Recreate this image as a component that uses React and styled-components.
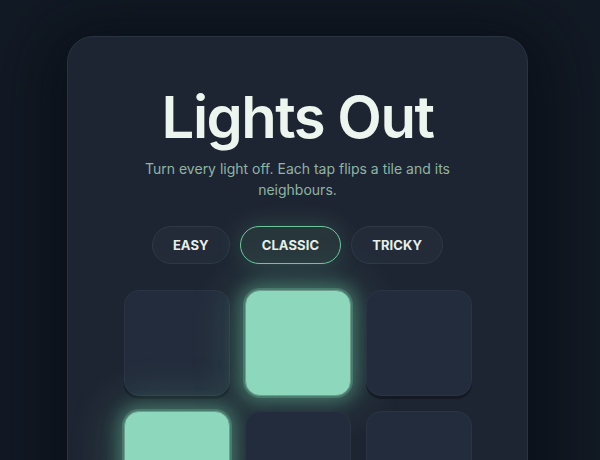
import React, { useState } from "react";
import styled, { createGlobalStyle, css } from "styled-components";

const Global = createGlobalStyle`
  html, body { margin: 0; padding: 0; background: #121a25; }
  body { font-family: "Inter", "DejaVu Sans", sans-serif; overflow: hidden; }
  * { box-sizing: border-box; }
`;

const Page = styled.div`
  width: 600px;
  height: 460px;
  display: flex;
  justify-content: center;
  padding: 36px 5px 0 0;
  background: #121a25;
  overflow: hidden;
`;

const Card = styled.main`
  width: 461px;
  flex: none;
  align-self: flex-start;
  background: #1e2532;
  border: 1px solid #2a3342;
  border-radius: 26px;
  padding: 45px 55px 40px;
  display: flex;
  flex-direction: column;
  align-items: center;
  box-shadow: 0 10px 60px 24px rgba(6, 10, 17, 0.6);
`;

const Title = styled.h1`
  margin: 0;
  font-size: 58px;
  line-height: 70px;
  font-weight: 600;
  letter-spacing: -1.5px;
  color: #ecf6ef;
`;

const Subtitle = styled.p`
  margin: 7px 0 0;
  max-width: 330px;
  text-align: center;
  font-size: 14px;
  line-height: 20.5px;
  color: #8fb4a4;
`;

const Modes = styled.div`
  display: flex;
  gap: 10px;
  margin-top: 26px;
`;

const Mode = styled.button`
  height: 38px;
  padding: 0 20px;
  border-radius: 19px;
  font-family: inherit;
  font-size: 13px;
  font-weight: 700;
  letter-spacing: 0.1px;
  color: #e6efe9;
  background: #232b39;
  border: 1px solid #2f3847;
  cursor: pointer;
  ${(p) =>
    p.$active &&
    css`
      padding: 0 21px;
      border: 1.5px solid #6cc79d;
      background: #27363b;
      box-shadow: 0 0 24px rgba(110, 200, 160, 0.22);
    `}
`;

const Grid = styled.div`
  margin-top: 26px;
  display: grid;
  grid-template-columns: repeat(3, 106px);
  gap: 15px;
`;

const Tile = styled.button`
  width: 106px;
  height: 106px;
  border-radius: 15px;
  padding: 0;
  cursor: pointer;
  background: #232c3c;
  border: 1px solid #2b3445;
  box-shadow: 0 3px 0 rgba(10, 14, 22, 0.5);
  ${(p) =>
    p.$on &&
    css`
      background: #8dd8bd;
      border: 1px solid #6f9e8f;
      box-shadow: 0 0 0 2px rgba(110, 190, 155, 0.3),
        0 0 16px 6px rgba(110, 200, 160, 0.35),
        0 0 40px 14px rgba(110, 200, 160, 0.2);
    `}
`;

const initial = [false, true, false, true, false, false, false, false, false];

export default function App() {
  const [mode, setMode] = useState("CLASSIC");
  const [tiles, setTiles] = useState(initial);

  const flip = (i) => {
    const r = Math.floor(i / 3);
    const c = i % 3;
    setTiles((t) =>
      t.map((v, j) => {
        const rr = Math.floor(j / 3);
        const cc = j % 3;
        const hit = (rr === r && Math.abs(cc - c) <= 1) || (cc === c && Math.abs(rr - r) <= 1);
        return hit ? !v : v;
      })
    );
  };

  return (
    <>
      <Global />
      <Page>
        <Card>
          <Title>Lights Out</Title>
          <Subtitle>Turn every light off. Each tap flips a tile and its neighbours.</Subtitle>
          <Modes>
            {["EASY", "CLASSIC", "TRICKY"].map((m) => (
              <Mode key={m} $active={mode === m} onClick={() => setMode(m)}>
                {m}
              </Mode>
            ))}
          </Modes>
          <Grid>
            {tiles.map((on, i) => (
              <Tile key={i} $on={on} onClick={() => flip(i)} aria-label={`tile ${i + 1}`} />
            ))}
          </Grid>
        </Card>
      </Page>
    </>
  );
}
